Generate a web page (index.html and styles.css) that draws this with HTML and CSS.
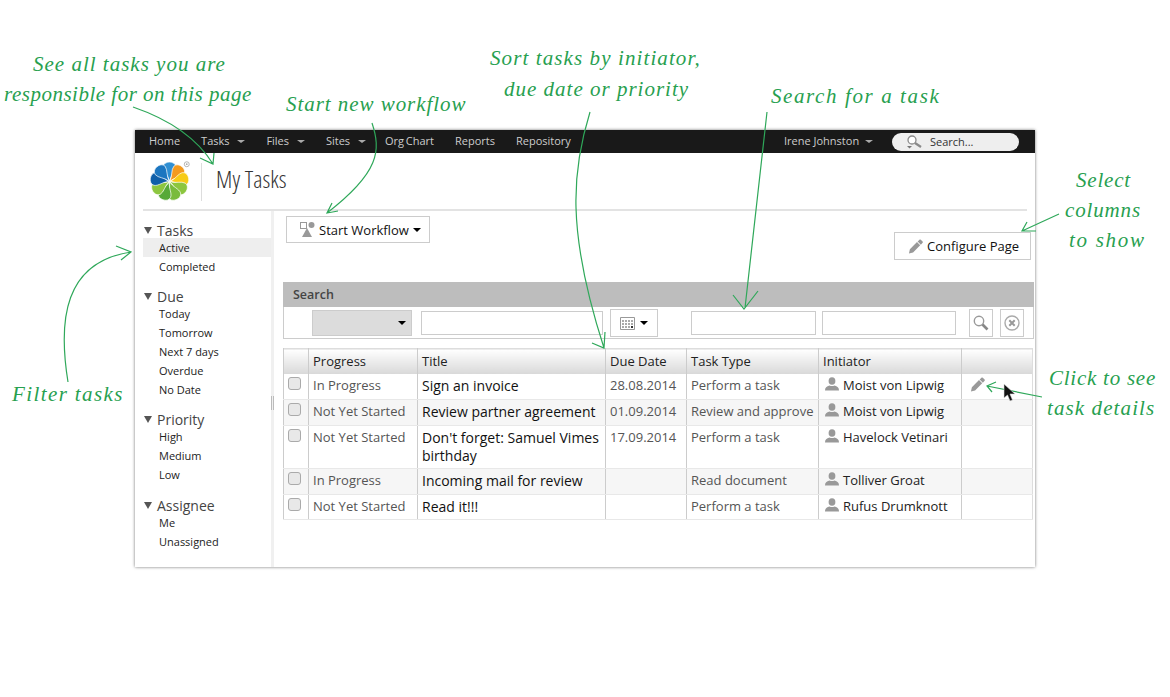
FILE: index.html
```html
<html>
  <head>
    <meta charset="utf-8">
    <title>My Tasks</title>
    <link rel="stylesheet" href="styles.css">
  </head>
  <body>
    <svg width="0" height="0" class="defs">
      <defs>
        <symbol id="pencil" viewBox="0 0 16 16">
          <path d="M1 15.500l1-4.600 7.600-7.600 3.400 3.400-7.600 7.600z M10.300 2.600l1.900-1.900c.4-.4 1-.4 1.400 0l2 2c.4.4.4 1 0 1.400l-1.900 1.900z"/>
        </symbol>
        <symbol id="person" viewBox="0 0 14 14">
          <ellipse cx="7" cy="4" rx="3.400" ry="3.800"/>
          <path d="M0 13.500c0-3 1.600-4.200 4.500-5 1.500.7 3.500.7 5 0 2.900.8 4.500 2 4.500 5z"/>
        </symbol>
      </defs>
    </svg>

    <div class="window">
      <div class="nav">
        <a class="nav-item">Home</a>
        <a class="nav-item">Tasks <i class="nav-caret"></i></a>
        <a class="nav-item">Files <i class="nav-caret"></i></a>
        <a class="nav-item nav-sites">Sites <i class="nav-caret"></i></a>
        <a class="nav-item nav-org">Org Chart</a>
        <a class="nav-item">Reports</a>
        <a class="nav-item">Repository</a>
        <a class="nav-item nav-user">Irene Johnston <i class="nav-caret"></i></a>
        <div class="nav-search">
          <svg class="nav-search-icon" width="18" height="14" viewBox="0 0 18 14">
            <circle cx="6" cy="5" r="4" fill="#fff" stroke="#8a8a8a" stroke-width="1.300"/>
            <path d="M9 8l6 4" stroke="#8a8a8a" stroke-width="2.200"/>
            <path d="M1 11h5l-2.500 2.500z" fill="#777"/>
          </svg>
          Search...
        </div>
      </div>

      <div class="header">
        <svg class="logo" width="41" height="41" viewBox="1 1 38 38">
          <defs>
            <path id="petal" d="M20 20C19 14 14 11 14 6.500 14.500 .5 25.500 .5 26 6.500 25.500 11 21 14 20 20z" stroke="#fff" stroke-width=".6"/>
          </defs>
          <use href="#petal" fill="#2f8fd3" transform="rotate(0 20 20)"/>
          <use href="#petal" fill="#f39a1f" transform="rotate(40 20 20)"/>
          <use href="#petal" fill="#f7cb16" transform="rotate(80 20 20)"/>
          <use href="#petal" fill="#8cc63f" transform="rotate(120 20 20)"/>
          <use href="#petal" fill="#79bb3c" transform="rotate(160 20 20)"/>
          <use href="#petal" fill="#57a938" transform="rotate(200 20 20)"/>
          <use href="#petal" fill="#8cc63f" transform="rotate(240 20 20)"/>
          <use href="#petal" fill="#0f5fa9" transform="rotate(280 20 20)"/>
          <use href="#petal" fill="#1c76c0" transform="rotate(320 20 20)"/>
          <circle cx="36" cy="4" r="2.300" fill="#fff" stroke="#aaa" stroke-width=".8"/>
          <circle cx="36" cy="4" r=".8" fill="#aaa"/>
        </svg>
        <div class="header-line"></div>
        <h1 class="page-title">My Tasks</h1>
      </div>

      <div class="content">
        <div class="sidebar">
          <div class="filter-group">
            <div class="filter-head"><i class="tri"></i>Tasks</div>
            <div class="filter-item active">Active</div>
            <div class="filter-item">Completed</div>
          </div>
          <div class="filter-group">
            <div class="filter-head"><i class="tri"></i>Due</div>
            <div class="filter-item">Today</div>
            <div class="filter-item">Tomorrow</div>
            <div class="filter-item">Next 7 days</div>
            <div class="filter-item">Overdue</div>
            <div class="filter-item">No Date</div>
          </div>
          <div class="filter-group">
            <div class="filter-head"><i class="tri"></i>Priority</div>
            <div class="filter-item">High</div>
            <div class="filter-item">Medium</div>
            <div class="filter-item">Low</div>
          </div>
          <div class="filter-group filter-last">
            <div class="filter-head"><i class="tri"></i>Assignee</div>
            <div class="filter-item">Me</div>
            <div class="filter-item">Unassigned</div>
          </div>
        </div>
        <div class="splitter"><i class="splitter-grip"></i></div>

        <div class="main">
          <div class="toolbar">
            <div class="btn btn-start">
              <svg width="15" height="15" viewBox="0 0 15 15">
                <rect x=".5" y=".5" width="6" height="6" fill="#fff" stroke="#999"/>
                <circle cx="11.500" cy="3" r="3" fill="#999"/>
                <path d="M7 6l5 9H2z" fill="#999"/>
              </svg>
              Start Workflow <i class="caret"></i>
            </div>
            <div class="btn btn-config">
              <svg class="icon-gray" width="15" height="15"><use href="#pencil"/></svg>
              Configure Page
            </div>
          </div>

          <div class="search-title">Search</div>
          <div class="search-row">
            <div class="search-select"><i class="caret"></i></div>
            <div class="search-input input-title"></div>
            <div class="search-date">
              <svg width="15" height="14" viewBox="0 0 15 14">
                <path d="M.5 1.500h14v12H.5z" fill="#fff" stroke="#999"/>
                <path d="M2 4h2v2H2zM5 4h2v2H5zM8 4h2v2H8zM11 4h2v2h-2zM2 7h2v2H2zM5 7h2v2H5zM8 7h2v2H8zM11 7h2v2h-2zM2 10h2v2H2zM5 10h2v2H5zM8 10h2v2H8z" fill="#aaa"/>
                <path d="M11 10h2v2h-2z" fill="#333"/>
              </svg>
              <i class="caret"></i>
            </div>
            <div class="search-input input-type"></div>
            <div class="search-input input-initiator"></div>
            <div class="search-icon-btn btn-go">
              <svg width="16" height="16" viewBox="0 0 16 16">
                <circle cx="6" cy="6" r="4.700" fill="#fff" stroke="#999" stroke-width="1.400"/>
                <path d="M9.500 9.500l5 5" stroke="#888" stroke-width="2.600"/>
              </svg>
            </div>
            <div class="search-icon-btn btn-clear">
              <svg width="16" height="16" viewBox="0 0 16 16">
                <circle cx="8" cy="8" r="7" fill="none" stroke="#aaa" stroke-width="1.400"/>
                <path d="M5.300 5.300l5.400 5.400M10.700 5.300l-5.400 5.400" stroke="#999" stroke-width="2"/>
              </svg>
            </div>
          </div>

          <table class="tasks">
            <colgroup>
              <col class="col-check"><col class="col-progress"><col class="col-title"><col class="col-due"><col class="col-type"><col class="col-init"><col class="col-action">
            </colgroup>
            <thead>
              <tr><th></th><th>Progress</th><th>Title</th><th>Due Date</th><th>Task Type</th><th>Initiator</th><th></th></tr>
            </thead>
            <tbody>
              <tr>
                <td><i class="check"></i></td><td>In Progress</td><td class="cell-title">Sign an invoice</td><td>28.08.2014</td><td>Perform a task</td>
                <td class="cell-init"><svg class="icon-gray"><use href="#person"/></svg>Moist von Lipwig</td>
                <td class="cell-action"><svg class="icon-gray" width="15" height="15"><use href="#pencil"/></svg></td>
              </tr>
              <tr>
                <td><i class="check"></i></td><td>Not Yet Started</td><td class="cell-title">Review partner agreement</td><td>01.09.2014</td><td>Review and approve</td>
                <td class="cell-init"><svg class="icon-gray"><use href="#person"/></svg>Moist von Lipwig</td><td></td>
              </tr>
              <tr class="row-tall">
                <td><i class="check"></i></td><td>Not Yet Started</td><td class="cell-title">Don't forget: Samuel Vimes birthday</td><td>17.09.2014</td><td>Perform a task</td>
                <td class="cell-init"><svg class="icon-gray"><use href="#person"/></svg>Havelock Vetinari</td><td></td>
              </tr>
              <tr>
                <td><i class="check"></i></td><td>In Progress</td><td class="cell-title">Incoming mail for review</td><td></td><td>Read document</td>
                <td class="cell-init"><svg class="icon-gray"><use href="#person"/></svg>Tolliver Groat</td><td></td>
              </tr>
              <tr class="row-last">
                <td><i class="check"></i></td><td>Not Yet Started</td><td class="cell-title">Read it!!!</td><td></td><td>Perform a task</td>
                <td class="cell-init"><svg class="icon-gray"><use href="#person"/></svg>Rufus Drumknott</td><td></td>
              </tr>
            </tbody>
          </table>
        </div>
      </div>
    </div>

    <!-- hand written notes drawn over the screenshot -->
    <svg class="arrows" width="1170" height="697" viewBox="0 0 1170 697">
      <path d="M133 107C165 118 195 135 213 164M200 158L213 164 214 153"/>
      <path d="M372 123C381 150 380 172 327 213M332 203L327 213 338 211"/>
      <path d="M590 112C572 170 566 230 604 348M605 332L604 348 592 343"/>
      <path d="M767 112L745 308M733 295L744 309 758 291"/>
      <path d="M1059 214L1022 231M1027 222L1022 231 1036 231"/>
      <path d="M68 382C58 320 64 262 131 252M116 246L131 252 121 260"/>
      <path d="M1042 397L987 386M996 382L987 386 992 392"/>
    </svg>
    <svg class="cursor" width="14" height="20" viewBox="0 0 14 20">
      <path d="M1 1v14l3.500-3 2.500 6 2.500-1-2.500-6h5z" fill="#111" stroke="#ddd" stroke-width=".6"/>
    </svg>

    <div class="note note-see-1">See all tasks you are</div>
    <div class="note note-see-2">responsible for on this page</div>
    <div class="note note-start">Start new workflow</div>
    <div class="note note-sort-1">Sort tasks by initiator,</div>
    <div class="note note-sort-2">due date or priority</div>
    <div class="note note-search">Search for a task</div>
    <div class="note note-select-1">Select</div>
    <div class="note note-select-2">columns</div>
    <div class="note note-select-3">to show</div>
    <div class="note note-filter">Filter tasks</div>
    <div class="note note-click-1">Click to see</div>
    <div class="note note-click-2">task details</div>
  </body>
</html>
```

FILE: styles.css
```css
html, body {
  margin: 0;
  height: 697px;
  overflow: hidden;
  background: #fff;
}
body {
  font-family: "Open Sans", sans-serif;
  color: #222;
  position: relative;
}
.defs {
  position: absolute;
}

.window {
  position: absolute;
  top: 130px;
  left: 135px;
  width: 900px;
  height: 437px;
  background: #fff;
  box-shadow: 0 0 3px rgba(0, 0, 0, .55);
}

/* top bar */
.nav {
  height: 23px;
  background: #191919;
  display: flex;
  align-items: center;
  gap: 21px;
  padding-left: 14px;
  font-size: 11px;
  color: #ccc;
}
.nav-item {
  white-space: nowrap;
  padding-bottom: 3px;
}
.nav-sites {
  margin-right: -2px;
}
.nav-org {
  word-spacing: -1px;
}
.nav-caret {
  display: inline-block;
  border-left: 4px solid transparent;
  border-right: 4px solid transparent;
  border-top: 3px solid #aaa;
  margin-left: 5px;
  vertical-align: 2px;
}
.nav-user {
  margin-left: auto;
  margin-right: -2px;
}
.nav-user .nav-caret {
  margin-left: 3px;
}
.nav-search {
  width: 127px;
  height: 18px;
  box-sizing: border-box;
  margin-right: 16px;
  background: #eee;
  border-radius: 9px;
  color: #333;
  line-height: 18px;
  padding-left: 38px;
  position: relative;
}
.nav-search-icon {
  position: absolute;
  left: 14px;
  top: 2px;
}

/* logo and page title */
.header {
  height: 56px;
  margin: 0 8px;
  border-bottom: 2px solid #e3e3e3;
  display: flex;
  align-items: center;
}
.logo {
  margin-left: 6px;
  margin-top: 1px;
}
.header-line {
  width: 1px;
  height: 38px;
  background: #ddd;
  margin-left: 11px;
  margin-top: 2px;
}
.page-title {
  margin: 0 0 5px 14px;
  font-size: 24px;
  font-weight: 300;
  color: #333;
  font-stretch: 75%;
  white-space: nowrap;
}

.content {
  display: flex;
  height: 356px;
  margin-left: 8px;
}

/* filters */
.sidebar {
  width: 128px;
  padding-top: 10px;
  box-sizing: border-box;
}
.filter-group {
  margin-bottom: 11px;
}
.filter-last {
  margin-top: 12px;
}
.filter-head {
  font-size: 14px;
  height: 17px;
  box-sizing: border-box;
  padding-top: 2px;
  line-height: 15px;
  color: #444;
  display: flex;
  align-items: center;
}
.tri {
  border-left: 4px solid transparent;
  border-right: 4px solid transparent;
  border-top: 7px solid #555;
  margin-right: 5px;
  margin-left: 1px;
}
.filter-item {
  height: 19px;
  line-height: 19px;
  font-size: 11px;
  padding-left: 16px;
  color: #222;
}
.filter-item.active {
  background: #eee;
}
.splitter {
  width: 3px;
  background: #f0f0f0;
  position: relative;
}
.splitter-grip {
  position: absolute;
  top: 185px;
  left: 0;
  width: 1px;
  height: 14px;
  border-left: 1px solid #bbb;
  border-right: 1px solid #bbb;
}

/* main column */
.main {
  flex: 1;
  padding: 5px 1px 0 9px;
  min-width: 0;
}
.toolbar {
  height: 66px;
  display: flex;
  justify-content: space-between;
  align-items: flex-start;
  padding: 0 3px 0 3px;
}
.btn {
  border: 1px solid #ccc;
  background: #fff;
  box-sizing: border-box;
  font-size: 13px;
  color: #111;
  display: flex;
  align-items: center;
  white-space: nowrap;
}
.btn-start {
  width: 144px;
  height: 27px;
  padding-left: 13px;
  gap: 4px;
}
.btn-config {
  width: 137px;
  height: 28px;
  margin-top: 16px;
  padding-left: 13px;
  gap: 4px;
}
.caret {
  display: inline-block;
  border-left: 4px solid transparent;
  border-right: 4px solid transparent;
  border-top: 4px solid #000;
}
.icon-gray {
  fill: #999;
}

.search-title {
  height: 25px;
  line-height: 25px;
  background: #bdbdbd;
  font-size: 12.5px;
  font-weight: 600;
  color: #444;
  padding-left: 10px;
}
.search-row {
  height: 32px;
  box-sizing: border-box;
  border: 1px solid #ccc;
  border-top: 0;
  display: flex;
  align-items: center;
  padding-left: 28px;
}
.search-select {
  width: 100px;
  height: 26px;
  box-sizing: border-box;
  background: #dcdcdc;
  border: 1px solid #ccc;
  display: flex;
  justify-content: flex-end;
  align-items: center;
  padding-right: 5px;
}
.search-input {
  height: 24px;
  box-sizing: border-box;
  border: 1px solid #ccc;
  background: #fff;
}
.input-title {
  width: 182px;
  margin-left: 9px;
}
.search-date {
  width: 48px;
  height: 28px;
  box-sizing: border-box;
  border: 1px solid #ccc;
  margin-left: 7px;
  display: flex;
  align-items: center;
  justify-content: center;
  gap: 5px;
}
.input-type {
  width: 125px;
  margin-left: 33px;
}
.input-initiator {
  width: 134px;
  margin-left: 6px;
}
.search-icon-btn {
  width: 24px;
  height: 28px;
  box-sizing: border-box;
  border: 1px solid #ccc;
  display: flex;
  align-items: center;
  justify-content: center;
}
.btn-go {
  margin-left: 13px;
}
.btn-clear {
  margin-left: 7px;
}

/* task table */
.tasks {
  margin-top: 9px;
  width: 750px;
  table-layout: fixed;
  border-collapse: collapse;
  border: 1px solid #ddd;
  font-size: 13px;
  color: #555;
}
.col-check { width: 25px; }
.col-progress { width: 109px; }
.col-title { width: 188px; }
.col-due { width: 81px; }
.col-type { width: 132px; }
.col-init { width: 143px; }
.tasks th {
  height: 25px;
  padding: 0 4px 1px;
  box-sizing: border-box;
  text-align: left;
  font-weight: 400;
  color: #222;
  background: linear-gradient(#fff, #d8d8d8);
  border-left: 1px solid #ccc;
  white-space: nowrap;
}
.tasks td {
  height: 26px;
  box-sizing: border-box;
  padding: 2px 4px 0;
  vertical-align: top;
  line-height: 18px;
  border-left: 1px solid #ccc;
  border-bottom: 1px solid #e8e8e8;
  white-space: nowrap;
}
.tasks .row-last td {
  height: 25px;
}
.tasks tbody tr:nth-child(even) td {
  background: #f6f6f6;
}
.tasks .row-tall td {
  height: 43px;
}
.tasks td.cell-title {
  font-size: 14px;
  color: #111;
  white-space: normal;
  padding-top: 3px;
}
.tasks td.cell-init {
  color: #222;
  padding-left: 6px;
}
.cell-init svg {
  width: 14px;
  height: 14px;
  margin-right: 4px;
  vertical-align: -1px;
}
.cell-action svg {
  margin: 1px 0 0 4px;
}
.check {
  display: block;
  width: 13px;
  height: 13px;
  margin-top: 1px;
  box-sizing: border-box;
  border: 1px solid #aaa;
  border-radius: 3px;
  background: #e8e8e8;
}

/* notes over the page */
.arrows {
  position: absolute;
  top: 0;
  left: 0;
  fill: none;
  stroke: #2fa85a;
  stroke-width: 1.2;
}
.cursor {
  position: absolute;
  left: 1003px;
  top: 383px;
}
.note {
  position: absolute;
  font-family: "Liberation Serif", serif;
  font-style: italic;
  font-size: 21px;
  line-height: 26px;
  color: #27a04f;
  white-space: nowrap;
}
.note-see-1 { left: 33px; top: 51px; letter-spacing: 1px; }
.note-see-2 { left: 4px; top: 81px; letter-spacing: .5px; }
.note-start { left: 286px; top: 91px; letter-spacing: .95px; }
.note-sort-1 { left: 490px; top: 45px; letter-spacing: 1.1px; }
.note-sort-2 { left: 504px; top: 76px; letter-spacing: 1px; }
.note-search { left: 771px; top: 83px; letter-spacing: 1.6px; }
.note-select-1 { left: 1076px; top: 167px; letter-spacing: .8px; }
.note-select-2 { left: 1065px; top: 197px; letter-spacing: .85px; }
.note-select-3 { left: 1069px; top: 227px; letter-spacing: 1.7px; }
.note-filter { left: 12px; top: 381px; letter-spacing: 1.4px; }
.note-click-1 { left: 1049px; top: 365px; letter-spacing: .75px; }
.note-click-2 { left: 1047px; top: 395px; letter-spacing: 1.1px; }
```
